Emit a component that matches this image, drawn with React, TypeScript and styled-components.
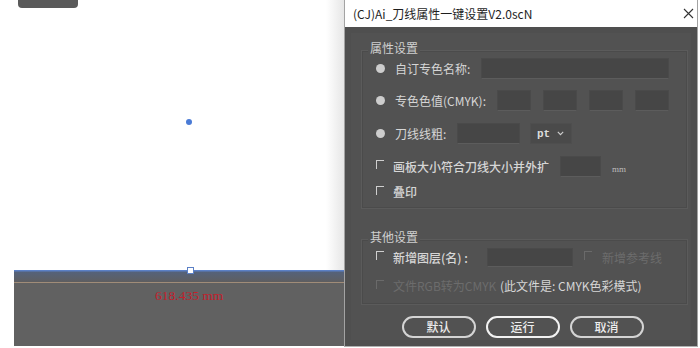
import React from 'react'
import styled, { createGlobalStyle } from 'styled-components'

const GlobalStyle = createGlobalStyle`
  html, body {
    margin: 0;
    padding: 0;
    background: #ffffff;
  }
  body {
    font-family: 'Noto Sans CJK SC', 'Noto Sans', sans-serif;
  }
`

const Check: React.FC<{ disabled?: boolean }> = ({ disabled }) => <CheckMark $disabled={disabled} />

const App: React.FC = () => {
  return (
    <>
      <GlobalStyle />
      <Screen>
        <Workspace>
          <Artboard>
            <ToolChip />
            <AnchorDot />
          </Artboard>
          <Strip>
            <StripEdge />
            <Handle />
            <Measure>618.435 mm</Measure>
          </Strip>
        </Workspace>

        <Dialog>
          <TitleBar>
            <Title>(CJ)Ai_刀线属性一键设置V2.0scN</Title>
            <svg width="11" height="11" viewBox="0 0 11 11">
              <path d="M1 1 L10 10 M10 1 L1 10" stroke="#333" strokeWidth="1.1" fill="none" />
            </svg>
          </TitleBar>

          <Body>
            <GroupTitle $top={14}>属性设置</GroupTitle>
            <GroupBox $padTop={7} $padBottom={6}>
              <Row $h={21}>
                <Radio />
                <Label $w={86} $gap={10}>自订专色名称:</Label>
                <Field $w={188} $h={21} />
              </Row>
              <Row $h={21} $mt={11}>
                <Radio />
                <Label $w={102} $gap={10}>专色色值(CMYK):</Label>
                <Boxes>
                  <Field $w={34} $h={21} />
                  <Field $w={34} $h={21} />
                  <Field $w={34} $h={21} />
                  <Field $w={34} $h={21} />
                </Boxes>
              </Row>
              <Row $h={21} $mt={12}>
                <Radio />
                <Label $w={62} $gap={10}>刀线线粗:</Label>
                <Field $w={63} $h={21} />
                <Select>
                  <span>pt</span>
                  <svg width="7" height="5" viewBox="0 0 7 5">
                    <path d="M0.8 0.8 L3.5 3.6 L6.2 0.8" stroke="#cfcfcf" strokeWidth="1.1" fill="none" />
                  </svg>
                </Select>
              </Row>
              <Row $h={21} $mt={12}>
                <Check />
                <Label $w={167} $gap={9} $bold>画板大小符合刀线大小并外扩</Label>
                <Field $w={41} $h={21} />
                <Unit>mm</Unit>
              </Row>
              <Row $h={20} $mt={5}>
                <Check />
                <Label $gap={9} $bold>叠印</Label>
              </Row>
            </GroupBox>

            <GroupTitle $top={21}>其他设置</GroupTitle>
            <GroupBox $padTop={8} $padBottom={8}>
              <Row $h={19}>
                <Check />
                <Label $w={94} $gap={9} $bold>新增图层(名) :</Label>
                <Field $w={86} $h={19} />
                <Spacer $w={11} />
                <Check disabled />
                <Label $gap={10} $disabled>新增参考线</Label>
              </Row>
              <Row $h={20} $mt={9}>
                <Check disabled />
                <Label $w={107} $gap={9} $disabled>文件RGB转为CMYK</Label>
                <Label>(此文件是: CMYK色彩模式)</Label>
              </Row>
            </GroupBox>

            <Buttons>
              <Button>默认</Button>
              <Button $focused>运行</Button>
              <Button>取消</Button>
            </Buttons>
          </Body>
        </Dialog>
      </Screen>
    </>
  )
}

const Screen = styled.div`
  display: flex;
  align-items: flex-start;
  width: 700px;
  height: 348px;
  overflow: hidden;
  background: #ffffff;
`

const Workspace = styled.div`
  display: flex;
  flex-direction: column;
  width: 344px;
  height: 346px;
`

const Artboard = styled.div`
  position: relative;
  flex: 1;
  background: linear-gradient(to right, #ffffff 0, #ffffff 326px, #e6e6e6 344px);
`

const ToolChip = styled.div`
  position: absolute;
  left: 18px;
  top: 0;
  width: 60px;
  height: 8px;
  background: #5a5a5a;
  border-radius: 0 0 4px 4px;
`

const AnchorDot = styled.div`
  position: absolute;
  left: 186px;
  top: 119px;
  width: 6px;
  height: 6px;
  border-radius: 50%;
  background: #4a7bd6;
`

const Strip = styled.div`
  position: relative;
  display: flex;
  flex-direction: column;
  margin-left: 14px;
  height: 76px;
  background: #616161;
`

const StripEdge = styled.div`
  height: 12px;
  background: linear-gradient(#5b80c6 0, #5b80c6 1px, #55627a 2px, #5e5e60 100%);
  border-bottom: 1px solid #a08c78;
`

const Handle = styled.div`
  position: absolute;
  left: 173px;
  top: -3px;
  width: 5px;
  height: 5px;
  background: #ffffff;
  border: 1px solid #5b80c6;
`

const Measure = styled.div`
  margin: 5px 0 0 141px;
  font-family: 'Liberation Serif', 'DejaVu Serif', serif;
  font-size: 13.5px;
  line-height: 16px;
  color: #c3202c;
`

const Dialog = styled.div`
  display: flex;
  flex-direction: column;
  box-sizing: border-box;
  width: 354px;
  height: 347px;
  border-left: 1px solid #a3a3a3;
  border-right: 1px solid #a3a3a3;
  border-bottom: 1px solid #b0b0b0;
`

const TitleBar = styled.div`
  display: flex;
  align-items: center;
  justify-content: space-between;
  height: 27px;
  padding: 0 3px 0 8px;
  background: #ffffff;
`

const Title = styled.span`
  font-size: 12px;
  color: #1e1e1e;
`

const Body = styled.div`
  flex: 1;
  display: flex;
  flex-direction: column;
  padding: 0 9px 0 16px;
  background: #525252;
  box-shadow: inset 0 0 0 6px #4f4f4f;
`

const GroupTitle = styled.div<{ $top: number }>`
  position: relative;
  z-index: 1;
  align-self: flex-start;
  margin: ${p => p.$top}px 0 0 7px;
  padding: 0 2px;
  font-size: 12px;
  line-height: 14px;
  color: #cfcfcf;
  background: #525252;
`

const GroupBox = styled.div<{ $padTop: number; $padBottom: number }>`
  margin-top: -5px;
  padding: ${p => p.$padTop}px 0 ${p => p.$padBottom}px 14px;
  border: 1px solid #5b5b5b;
  box-shadow: inset 0 0 0 1px #4b4b4b;
`

const Row = styled.div<{ $h: number; $mt?: number }>`
  display: flex;
  align-items: center;
  height: ${p => p.$h}px;
  margin-top: ${p => p.$mt ?? 0}px;
`

const Radio = styled.span`
  flex: none;
  width: 9px;
  height: 9px;
  border-radius: 50%;
  background: #cdcdcd;
`

const CheckMark = styled.span<{ $disabled?: boolean }>`
  flex: none;
  box-sizing: border-box;
  width: 8px;
  height: 9px;
  margin-top: -4px;
  border-top: 1px solid ${p => (p.$disabled ? '#6a6a6a' : '#cfcfcf')};
  border-left: 1px solid ${p => (p.$disabled ? '#6a6a6a' : '#cfcfcf')};
`

const Label = styled.span<{ $w?: number; $gap?: number; $bold?: boolean; $disabled?: boolean }>`
  flex: none;
  width: ${p => (p.$w ? `${p.$w}px` : 'auto')};
  margin-left: ${p => p.$gap ?? 0}px;
  font-size: 12px;
  line-height: 14px;
  white-space: nowrap;
  font-weight: ${p => (p.$bold ? 500 : 400)};
  color: ${p => (p.$disabled ? '#6c6c6c' : '#d6d6d6')};
`

const Field = styled.span<{ $w: number; $h: number }>`
  flex: none;
  box-sizing: border-box;
  width: ${p => p.$w}px;
  height: ${p => p.$h}px;
  background: #464646;
  border: 1px solid #4a4a4a;
  border-bottom-color: #5c5c5c;
`

const Boxes = styled.div`
  display: flex;
  gap: 12px;
`

const Select = styled.span`
  display: flex;
  align-items: center;
  justify-content: space-between;
  box-sizing: border-box;
  width: 42px;
  height: 21px;
  margin-left: 10px;
  padding: 0 7px 0 6px;
  background: #4a4a4a;
  border: 1px solid #4e4e4e;
  font-family: 'Liberation Mono', 'DejaVu Sans Mono', monospace;
  font-size: 11px;
  font-weight: 700;
  color: #dcdcdc;
`

const Unit = styled.span`
  margin: 4px 0 0 11px;
  font-family: 'Liberation Serif', 'DejaVu Serif', serif;
  font-size: 9px;
  color: #bdbdbd;
`

const Spacer = styled.span<{ $w: number }>`
  flex: none;
  width: ${p => p.$w}px;
`

const Buttons = styled.div`
  display: flex;
  justify-content: center;
  gap: 10px;
  margin-top: 11px;
  padding-right: 4px;
`

const Button = styled.button<{ $focused?: boolean }>`
  box-sizing: border-box;
  width: 74px;
  height: 22px;
  padding: 0;
  border: 2px solid ${p => (p.$focused ? '#f2f2f2' : '#d4d4d4')};
  border-radius: 11px;
  background: transparent;
  font-family: 'Noto Sans CJK SC', 'Noto Sans', sans-serif;
  font-size: 12px;
  font-weight: 500;
  line-height: 16px;
  color: #ededed;
`

export default App
